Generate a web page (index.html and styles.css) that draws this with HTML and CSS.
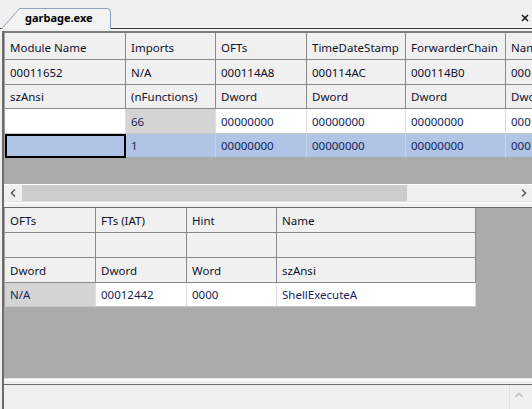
FILE: index.html
```html
<!DOCTYPE html>
<html>
<head>
<meta charset="utf-8">
<link rel="stylesheet" href="styles.css">
</head>
<body>
<div class="tabstrip">
  <div class="tab">
    <svg class="tab-shape" width="112" height="22" viewBox="0 0 112 22"><path d="M1.5 22 L19.5 1.5 H107 Q110.5 1.5 110.5 5 V22" fill="#f3f3f3" stroke="#8fa3bd" stroke-width="1"/></svg>
    <span class="tab-label">garbage.exe</span>
  </div>
  <svg class="close" width="8" height="8" viewBox="0 0 8 8"><path d="M1 1 L7 7 M7 1 L1 7" stroke="#1a1a1a" stroke-width="1.6"/></svg>
</div>
<div class="frame">
  <div class="pane pane1">
    <div class="grid g1">
      <div class="c r1">Module Name</div><div class="c r1">Imports</div><div class="c r1">OFTs</div><div class="c r1">TimeDateStamp</div><div class="c r1">ForwarderChain</div><div class="c r1">Name</div>
      <div class="c">00011652</div><div class="c">N/A</div><div class="c">000114A8</div><div class="c">000114AC</div><div class="c">000114B0</div><div class="c">00011652</div>
      <div class="c hl">szAnsi</div><div class="c hl">(nFunctions)</div><div class="c hl">Dword</div><div class="c hl">Dword</div><div class="c hl">Dword</div><div class="c hl">Dword</div>
      <div class="c d"></div><div class="c d gray">66</div><div class="c d">00000000</div><div class="c d">00000000</div><div class="c d">00000000</div><div class="c d">00011652</div>
      <div class="c s focus"></div><div class="c s">1</div><div class="c s">00000000</div><div class="c s">00000000</div><div class="c s">00000000</div><div class="c s">00011652</div>
    </div>
  </div>
  <div class="hscroll">
    <div class="arrow left"><svg width="6" height="8" viewBox="0 0 6 8"><path d="M5 0.5 L1.5 4 L5 7.5" fill="none" stroke="#606060" stroke-width="1.6"/></svg></div>
    <div class="thumb"></div>
    <div class="track"></div>
    <div class="arrow right"><svg width="6" height="8" viewBox="0 0 6 8"><path d="M1 0.5 L4.5 4 L1 7.5" fill="none" stroke="#606060" stroke-width="1.6"/></svg></div>
  </div>
  <div class="splitter"></div>
  <div class="pane pane2">
    <div class="grid g2">
      <div class="c">OFTs</div><div class="c">FTs (IAT)</div><div class="c">Hint</div><div class="c">Name</div>
      <div class="c"></div><div class="c"></div><div class="c"></div><div class="c"></div>
      <div class="c hl">Dword</div><div class="c hl">Dword</div><div class="c hl">Word</div><div class="c hl">szAnsi</div>
      <div class="c d gray">N/A</div><div class="c d">00012442</div><div class="c d">0000</div><div class="c d">ShellExecuteA</div>
    </div>
  </div>
  <div class="splitter"></div>
  <div class="bottom">
    <div class="bottom-body"></div>
    <div class="vscroll">
      <div class="varrow"><svg width="8" height="6" viewBox="0 0 8 6"><path d="M0.5 5 L4 1.5 L7.5 5" fill="none" stroke="#c2c2c2" stroke-width="1.6"/></svg></div>
    </div>
  </div>
</div>
</body>
</html>
```

FILE: styles.css
```css
* { box-sizing: border-box; }
html, body { margin: 0; padding: 0; }
body {
  width: 532px;
  height: 409px;
  overflow: hidden;
  background: #f0f0f0;
  font-family: "Noto Sans", "Liberation Sans", sans-serif;
  font-size: 11.5px;
  color: #000;
}

.tabstrip {
  height: 29px;
  border-bottom: 1px solid #3c3c3c;
  display: flex;
  align-items: flex-end;
  justify-content: space-between;
}
.tab {
  position: relative;
  width: 112px;
  height: 22px;
  margin-bottom: -1px;
}
.tab-shape { position: absolute; left: 0; top: 0; }
.tab-label {
  position: relative;
  display: block;
  padding: 4px 0 0 25px;
  font-weight: bold;
  font-size: 11px;
  line-height: 14px;
}
.close { margin: 0 3px 6px 0; }

.frame {
  margin: 2px 0 0 2px;
  border-left: 2px solid #6b6b6b;
}
.pane {
  background: #ababab;
  overflow: hidden;
}
.pane1 {
  height: 153px;
  border-top: 2px solid #7d7d7d;
}
.pane2 {
  height: 171px;
  border-top: 1px solid #6b6b6b;
}
.grid {
  display: grid;
  width: max-content;
  border-left: 1px solid #a0a0a0;
}
.g1 {
  grid-template-columns: 121px 90px 91px 99px 100px 100px;
  grid-template-rows: 27px 25px 24px 25px 24px;
}
.g2 {
  grid-template-columns: 91px 91px 90px 199px;
  grid-template-rows: 25px 25px 25px 24px;
}
.c {
  display: flex;
  align-items: center;
  padding-left: 5px;
  white-space: nowrap;
  overflow: hidden;
  background: #f0f0f0;
  border-right: 1px solid #8a8a8a;
  border-bottom: 1px solid #8a8a8a;
  color: #10102a;
}
.r1 { padding-top: 3px; }
.d {
  background: #fff;
  border-right-color: #dcdcdc;
  border-bottom-color: #c8c8c8;
  color: #14245c;
}
.d.gray { background: #d4d4d4; }
.s {
  background: #b0c4e6;
  border-right-color: #c6d3ea;
  border-bottom-color: #a8a8a8;
  color: #14245c;
}
.focus {
  box-shadow: inset 1px 1px 0 1px #000, inset -1px -1px 0 0 #000;
  border-right-color: #000;
  border-bottom-color: #000;
}

.hscroll {
  height: 17px;
  display: flex;
  align-items: stretch;
  background: #f0f0f0;
  border-top: 1px solid #fff;
}
.arrow {
  display: flex;
  align-items: center;
  justify-content: center;
}
.arrow.left { width: 18px; }
.arrow.right { width: 17px; }
.thumb { width: 385px; background: #cdcdcd; }
.track { flex: 1; }

.splitter {
  height: 6px;
  background: linear-gradient(#e4e4e4 0 1px, #fbfbfb 1px 3px, #f0f0f0 3px);
}

.bottom {
  height: 26px;
  border-top: 1px solid #6b6b6b;
  display: flex;
}
.bottom-body { flex: 1; }
.vscroll {
  width: 23px;
  border-left: 1px solid #dedede;
}
.varrow {
  width: 17px;
  height: 20px;
  display: flex;
  align-items: center;
  justify-content: center;
}
```
